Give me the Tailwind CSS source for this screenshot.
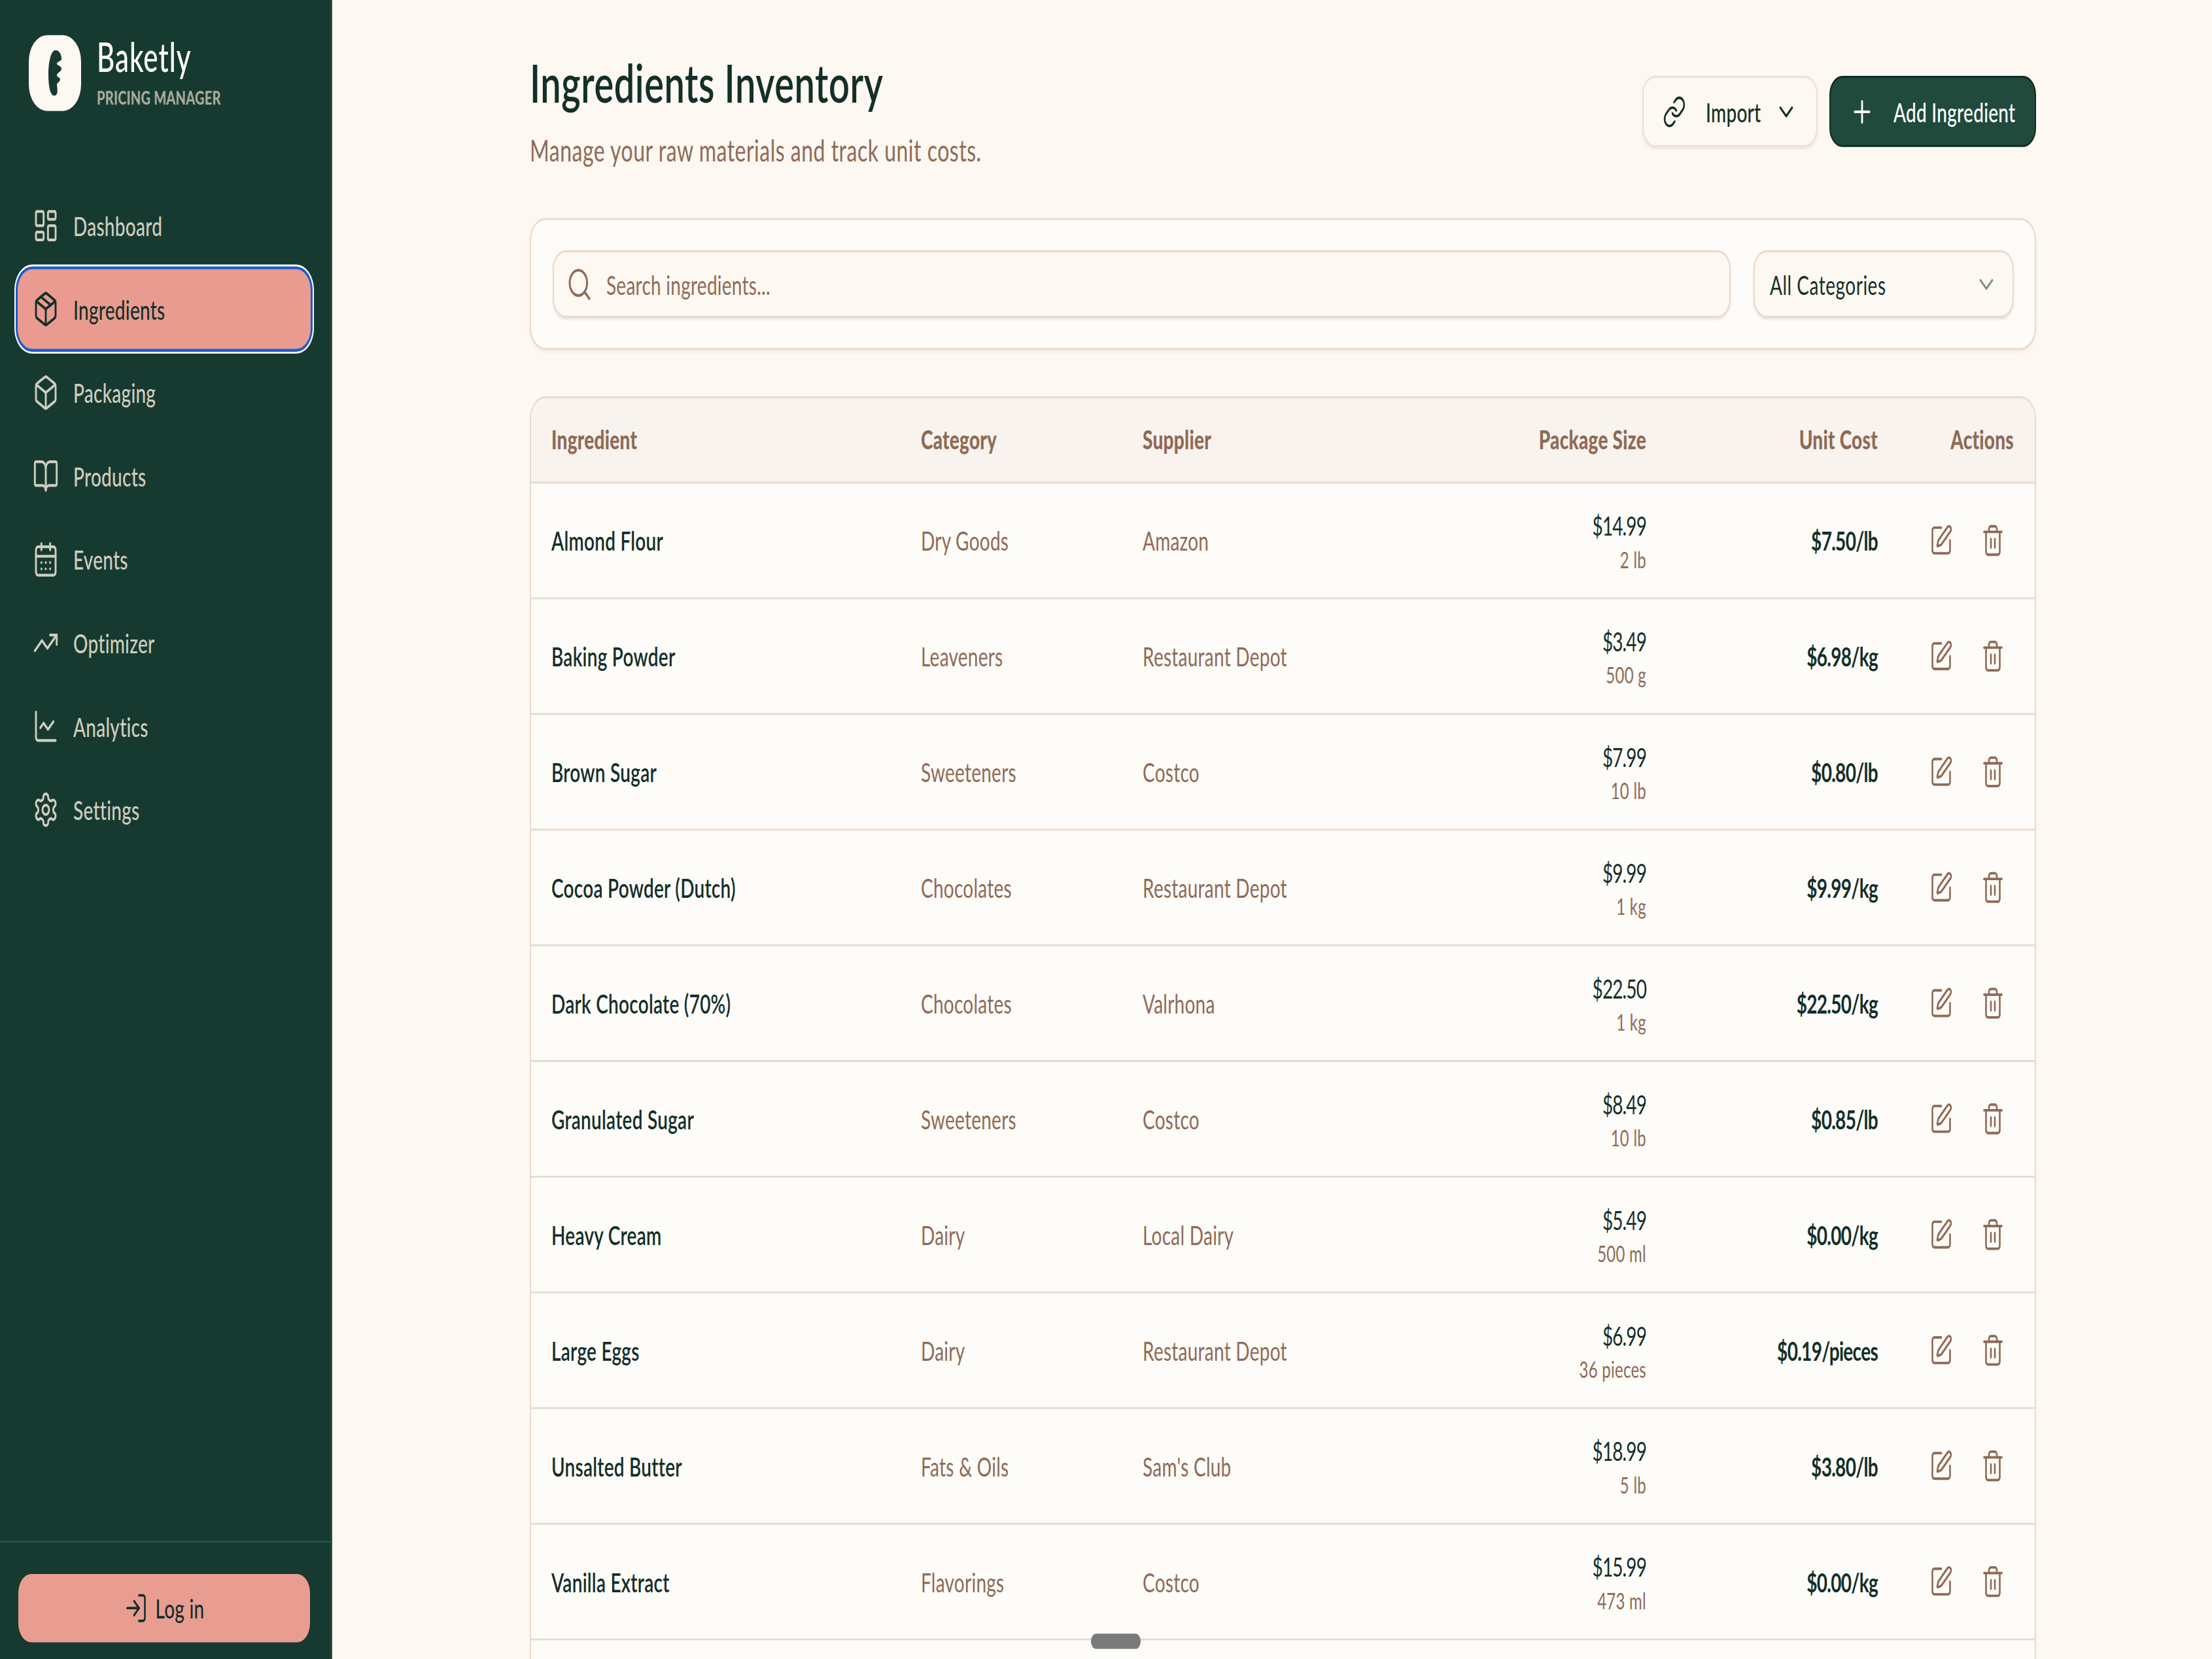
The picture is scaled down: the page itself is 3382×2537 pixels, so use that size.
<!DOCTYPE html>
<html lang="en">
<head>
<meta charset="UTF-8">
<meta name="viewport" content="width=device-width, initial-scale=1.0">
<script src="https://cdn.jsdelivr.net/npm/@tailwindcss/browser@4"></script>
<title>Baketly - Ingredients</title>
</head>
<body class="w-[3382px] h-[2537px] overflow-hidden bg-[#fef8f2]">
<!-- the reference is stretched vertically, so the whole app is laid out at 1750px and scaled up -->
<div class="relative flex w-[3382px] h-[1750px] origin-top-left scale-y-[1.45] overflow-hidden bg-[#fef8f2] font-['Lato',sans-serif] text-[28px] tracking-[0.25px] text-[#132f28]">

  <aside class="flex flex-col w-[508px] h-full shrink-0 bg-[#173a30] border-r-2 border-[#25574a]">
    <div class="flex items-start gap-6 pl-[44px] pt-[37px] h-[196px]">
      <div class="flex items-center justify-center w-20 h-20 rounded-[28px] bg-[#fef8f2] shrink-0">
        <svg class="w-[20px] h-[48px]" viewBox="0 0 20 48" fill="#173a30"><path d="M11 0C16 0 20 4 20 9C20 12 14 11 13 14C12.5 16 19 16 20 19C20 23 14 23 13 26C13 29 18 28 18 31C17 34 13 34 13 37C14 41 15 48 9 48C3 48 0 38 0 26C0 12 4 0 11 0Z"/></svg>
      </div>
      <div class="flex flex-col">
        <span class="text-[42px] leading-[44px] mt-[1px] text-white font-medium tracking-[1px]">Baketly</span>
        <span class="text-[20px] leading-[24px] mt-[8px] font-black tracking-[0.2px] text-[#a8aa9b]">PRICING MANAGER</span>
      </div>
    </div>

    <nav class="flex flex-col gap-1 pl-[27px] pr-[31px] font-medium text-[#cfcdbf]">
      <a class="flex items-center gap-[22px] h-[84px] pl-[23px] rounded-[22px]">
        <svg class="w-10 h-10" viewBox="0 0 24 24" fill="none" stroke="currentColor" stroke-width="1.75" stroke-linecap="round" stroke-linejoin="round"><rect x="3" y="3" width="7" height="9" rx="1"/><rect x="14" y="3" width="7" height="5" rx="1"/><rect x="14" y="12" width="7" height="9" rx="1"/><rect x="3" y="16" width="7" height="5" rx="1"/></svg>
        <span class="pb-[1px]">Dashboard</span>
      </a>
      <a class="flex items-center gap-[22px] h-[84px] pl-[23px] rounded-[22px] bg-[#e99b8f] text-[#132f28] shadow-[0_0_0_3px_#1d5bd0,0_0_0_5px_#ffffff]">
        <svg class="w-10 h-10" viewBox="0 0 24 24" fill="none" stroke="currentColor" stroke-width="1.75" stroke-linecap="round" stroke-linejoin="round"><path d="M11 21.73a2 2 0 0 0 2 0l7-4A2 2 0 0 0 21 16V8a2 2 0 0 0-1-1.73l-7-4a2 2 0 0 0-2 0l-7 4A2 2 0 0 0 3 8v8a2 2 0 0 0 1 1.73z"/><path d="M12 22V12"/><path d="m3.3 7 8.7 5 8.7-5"/><path d="m7.5 4.27 9 5.15"/></svg>
        <span class="pb-[1px]">Ingredients</span>
      </a>
      <a class="flex items-center gap-[22px] h-[84px] pl-[23px] rounded-[22px]">
        <svg class="w-10 h-10" viewBox="0 0 24 24" fill="none" stroke="currentColor" stroke-width="1.75" stroke-linecap="round" stroke-linejoin="round"><path d="M21 8a2 2 0 0 0-1-1.73l-7-4a2 2 0 0 0-2 0l-7 4A2 2 0 0 0 3 8v8a2 2 0 0 0 1 1.73l7 4a2 2 0 0 0 2 0l7-4A2 2 0 0 0 21 16Z"/><path d="m3.3 7 8.7 5 8.7-5"/><path d="M12 22V12"/></svg>
        <span class="pb-[1px]">Packaging</span>
      </a>
      <a class="flex items-center gap-[22px] h-[84px] pl-[23px] rounded-[22px]">
        <svg class="w-10 h-10" viewBox="0 0 24 24" fill="none" stroke="currentColor" stroke-width="1.75" stroke-linecap="round" stroke-linejoin="round"><path d="M12 7v14"/><path d="M3 18a1 1 0 0 1-1-1V4a1 1 0 0 1 1-1h5a4 4 0 0 1 4 4 4 4 0 0 1 4-4h5a1 1 0 0 1 1 1v13a1 1 0 0 1-1 1h-6a3 3 0 0 0-3 3 3 3 0 0 0-3-3z"/></svg>
        <span class="pb-[1px]">Products</span>
      </a>
      <a class="flex items-center gap-[22px] h-[84px] pl-[23px] rounded-[22px]">
        <svg class="w-10 h-10" viewBox="0 0 24 24" fill="none" stroke="currentColor" stroke-width="1.75" stroke-linecap="round" stroke-linejoin="round"><path d="M8 2v4"/><path d="M16 2v4"/><rect x="3" y="4" width="18" height="18" rx="2"/><path d="M3 10h18"/><path d="M8 14h.01"/><path d="M12 14h.01"/><path d="M16 14h.01"/><path d="M8 18h.01"/><path d="M12 18h.01"/><path d="M16 18h.01"/></svg>
        <span class="pb-[1px]">Events</span>
      </a>
      <a class="flex items-center gap-[22px] h-[84px] pl-[23px] rounded-[22px]">
        <svg class="w-10 h-10" viewBox="0 0 24 24" fill="none" stroke="currentColor" stroke-width="1.75" stroke-linecap="round" stroke-linejoin="round"><path d="M16 7h6v6"/><path d="m22 7-8.5 8.5-5-5L2 17"/></svg>
        <span class="pb-[1px]">Optimizer</span>
      </a>
      <a class="flex items-center gap-[22px] h-[84px] pl-[23px] rounded-[22px]">
        <svg class="w-10 h-10" viewBox="0 0 24 24" fill="none" stroke="currentColor" stroke-width="1.75" stroke-linecap="round" stroke-linejoin="round"><path d="M3 3v16a2 2 0 0 0 2 2h16"/><path d="m19 9-5 5-4-4-3 3"/></svg>
        <span class="pb-[1px]">Analytics</span>
      </a>
      <a class="flex items-center gap-[22px] h-[84px] pl-[23px] rounded-[22px]">
        <svg class="w-10 h-10" viewBox="0 0 24 24" fill="none" stroke="currentColor" stroke-width="1.75" stroke-linecap="round" stroke-linejoin="round"><path d="M12.22 2h-.44a2 2 0 0 0-2 2v.18a2 2 0 0 1-1 1.73l-.43.25a2 2 0 0 1-2 0l-.15-.08a2 2 0 0 0-2.73.73l-.22.38a2 2 0 0 0 .73 2.73l.15.1a2 2 0 0 1 1 1.72v.51a2 2 0 0 1-1 1.74l-.15.09a2 2 0 0 0-.73 2.73l.22.38a2 2 0 0 0 2.73.73l.15-.08a2 2 0 0 1 2 0l.43.25a2 2 0 0 1 1 1.73V20a2 2 0 0 0 2 2h.44a2 2 0 0 0 2-2v-.18a2 2 0 0 1 1-1.73l.43-.25a2 2 0 0 1 2 0l.15.08a2 2 0 0 0 2.73-.73l.22-.39a2 2 0 0 0-.73-2.73l-.15-.08a2 2 0 0 1-1-1.74v-.5a2 2 0 0 1 1-1.74l.15-.09a2 2 0 0 0 .73-2.73l-.22-.38a2 2 0 0 0-2.73-.73l-.15.08a2 2 0 0 1-2 0l-.43-.25a2 2 0 0 1-1-1.73V4a2 2 0 0 0-2-2z"/><circle cx="12" cy="12" r="3"/></svg>
        <span class="pb-[1px]">Settings</span>
      </a>
    </nav>

    <div class="mt-auto border-t-2 border-[#25574a] pl-[28px] pr-[32px] pt-[33px] pb-[18px]">
      <button class="flex items-center justify-center gap-[12px] w-full h-[72px] rounded-[20px] bg-[#e99d91] font-medium text-[#132f28]">
        <svg class="w-9 h-9" viewBox="0 0 24 24" fill="none" stroke="currentColor" stroke-width="1.75" stroke-linecap="round" stroke-linejoin="round"><path d="m10 17 5-5-5-5"/><path d="M15 12H3"/><path d="M15 3h4a2 2 0 0 1 2 2v14a2 2 0 0 1-2 2h-4"/></svg>
        Log in
      </button>
    </div>
  </aside>

  <main class="flex-1 pl-[302px] pr-[269px] pt-[57px]">
    <header class="flex items-start justify-between h-[122px] mb-[51px]">
      <div>
        <h1 class="text-[56px] leading-[60px] font-semibold text-[#132f28] tracking-[0.55px]">Ingredients Inventory</h1>
        <p class="mt-[21px] text-[32px] leading-[40px] tracking-[0.5px] text-[#8f6a55]">Manage your raw materials and track unit costs.</p>
      </div>
      <div class="flex items-center gap-[18px] mt-[23px]">
        <button class="flex items-center h-[75px] w-[268px] pl-[29px] rounded-[20px] border-2 border-[#ece0d6] bg-[#fef8f2] font-medium shadow-[0_2px_3px_rgba(120,90,70,0.12)]">
          <svg class="w-9 h-9" viewBox="0 0 24 24" fill="none" stroke="currentColor" stroke-width="1.75" stroke-linecap="round" stroke-linejoin="round"><path d="M10 13a5 5 0 0 0 7.54.54l3-3a5 5 0 0 0-7.07-7.07l-1.72 1.71"/><path d="M14 11a5 5 0 0 0-7.54-.54l-3 3a5 5 0 0 0 7.07 7.07l1.71-1.71"/></svg>
          <span class="ml-[30px]">Import</span>
          <svg class="w-9 h-9 ml-[21px]" viewBox="0 0 24 24" fill="none" stroke="currentColor" stroke-width="1.75" stroke-linecap="round" stroke-linejoin="round"><path d="m6 9 6 6 6-6"/></svg>
        </button>
        <button class="flex items-center h-[75px] w-[316px] pl-[29px] rounded-[20px] border-2 border-[#0f2a22] bg-[#1f4a3c] font-medium text-white">
          <svg class="w-[38px] h-[38px]" viewBox="0 0 24 24" fill="none" stroke="currentColor" stroke-width="1.75" stroke-linecap="round" stroke-linejoin="round"><path d="M5 12h14"/><path d="M12 5v14"/></svg>
          <span class="ml-[29px]">Add Ingredient</span>
        </button>
      </div>
    </header>

    <section class="flex gap-[35px] h-[139px] pl-[33px] pr-[32px] py-[32px] rounded-[24px] border-2 border-[#e8dace] bg-[#fefcf9] shadow-[0_2px_4px_rgba(120,90,70,0.08)] mb-[49px]">
      <div class="flex items-center flex-1 h-[71px] pl-[19px] rounded-[20px] border-2 border-[#e8dace] bg-[#fef8f2] shadow-[0_2px_3px_rgba(120,90,70,0.15)] text-[#8f6a55]">
        <svg class="w-10 h-10" viewBox="0 0 24 24" fill="none" stroke="currentColor" stroke-width="1.75" stroke-linecap="round" stroke-linejoin="round"><path d="m21 21-4.34-4.34"/><circle cx="11" cy="11" r="8"/></svg>
        <span class="ml-[21px]">Search ingredients...</span>
      </div>
      <div class="flex items-center justify-between w-[398px] h-[71px] px-[23px] rounded-[20px] border-2 border-[#e8dace] bg-[#fef8f2] shadow-[0_2px_3px_rgba(120,90,70,0.15)]">
        <span class="tracking-[0.5px]">All Categories</span>
        <svg class="w-9 h-9 -mr-[1px] text-[#7f8f87]" viewBox="0 0 24 24" fill="none" stroke="currentColor" stroke-width="1.75" stroke-linecap="round" stroke-linejoin="round"><path d="m6 9 6 6 6-6"/></svg>
      </div>
    </section>

    <section class="rounded-t-[24px] border-2 border-[#e8dace] bg-[#fefcf9] overflow-hidden">
      <table class="w-full table-fixed border-collapse">
        <colgroup>
          <col class="w-[567px]"><col class="w-[339px]"><col class="w-[382px]"><col class="w-[446px]"><col class="w-[354px]"><col class="w-[211px]">
        </colgroup>
        <thead>
          <tr class="h-[89px] bg-[#f8f3ee] border-b-2 border-[#e8dace] text-[#8f6a55]">
            <th class="pl-[31px] pr-[29px] pb-[2px] text-left font-black">Ingredient</th>
            <th class="px-[29px] pb-[2px] text-left font-black">Category</th>
            <th class="px-[29px] pb-[2px] text-left font-black">Supplier</th>
            <th class="px-[29px] pb-[2px] text-right font-black">Package Size</th>
            <th class="px-[29px] pb-[2px] text-right font-black">Unit Cost</th>
            <th class="pr-[32px] pb-[2px] text-right font-black">Actions</th>
          </tr>
        </thead>
        <tbody id="rows"></tbody>
      </table>
    </section>
  </main>

  <div class="absolute left-[1668px] top-[1723px] w-[76px] h-4 rounded-full bg-[#7a7a7a]"></div>
</div>

<script>
  const items = [
    ["Almond Flour", "Dry Goods", "Amazon", "$14.99", "2 lb", "$7.50/lb"],
    ["Baking Powder", "Leaveners", "Restaurant Depot", "$3.49", "500 g", "$6.98/kg"],
    ["Brown Sugar", "Sweeteners", "Costco", "$7.99", "10 lb", "$0.80/lb"],
    ["Cocoa Powder (Dutch)", "Chocolates", "Restaurant Depot", "$9.99", "1 kg", "$9.99/kg"],
    ["Dark Chocolate (70%)", "Chocolates", "Valrhona", "$22.50", "1 kg", "$22.50/kg"],
    ["Granulated Sugar", "Sweeteners", "Costco", "$8.49", "10 lb", "$0.85/lb"],
    ["Heavy Cream", "Dairy", "Local Dairy", "$5.49", "500 ml", "$0.00/kg"],
    ["Large Eggs", "Dairy", "Restaurant Depot", "$6.99", "36 pieces", "$0.19/pieces"],
    ["Unsalted Butter", "Fats & Oils", "Sam's Club", "$18.99", "5 lb", "$3.80/lb"],
    ["Vanilla Extract", "Flavorings", "Costco", "$15.99", "473 ml", "$0.00/kg"]
  ];

  const editIcon = `<svg class="w-9 h-9" viewBox="0 0 24 24" fill="none" stroke="currentColor" stroke-width="1.75" stroke-linecap="round" stroke-linejoin="round"><path d="M12 3H5a2 2 0 0 0-2 2v14a2 2 0 0 0 2 2h14a2 2 0 0 0 2-2v-7"/><path d="M18.375 2.625a1 1 0 0 1 3 3l-9.013 9.014a2 2 0 0 1-.853.505l-2.873.84a.5.5 0 0 1-.62-.62l.84-2.873a2 2 0 0 1 .506-.852z"/></svg>`;
  const trashIcon = `<svg class="w-9 h-9" viewBox="0 0 24 24" fill="none" stroke="currentColor" stroke-width="1.75" stroke-linecap="round" stroke-linejoin="round"><path d="M10 11v6"/><path d="M14 11v6"/><path d="M19 6v14a2 2 0 0 1-2 2H7a2 2 0 0 1-2-2V6"/><path d="M3 6h18"/><path d="M8 6V4a2 2 0 0 1 2-2h4a2 2 0 0 1 2 2v2"/></svg>`;

  let html = "";
  items.forEach(i => {
    html += `<tr class="h-[122px] border-b-2 border-[#e8dace]">
      <td class="pl-[31px] pr-[29px] font-semibold">${i[0].replace("&", "&amp;")}</td>
      <td class="px-[29px] text-[#8f6a55]">${i[1].replace("&", "&amp;")}</td>
      <td class="px-[29px] text-[#8f6a55]">${i[2]}</td>
      <td class="px-[29px] text-right">
        <div class="leading-[40px] tracking-[-0.9px]">${i[3]}</div>
        <div class="text-[24px] leading-[32px] text-[#8f6a55]">${i[4]}</div>
      </td>
      <td class="px-[29px] text-right font-bold tracking-[-0.7px]">${i[5]}</td>
      <td class="pr-[32px]"><div class="flex justify-end gap-[15px] text-[#8f6a55]"><button class="p-[14px]">${editIcon}</button><button class="p-[14px]">${trashIcon}</button></div></td>
    </tr>`;
  });
  html += `<tr class="h-[122px]"><td colspan="6"></td></tr>`;
  document.getElementById("rows").innerHTML = html;
</script>
</body>
</html>
